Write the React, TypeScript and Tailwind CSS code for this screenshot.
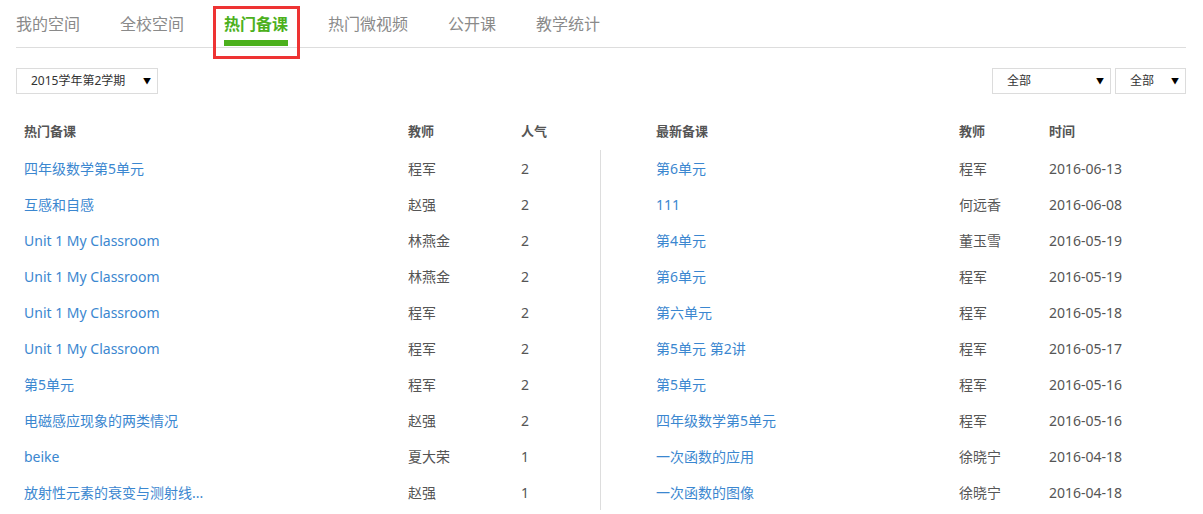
import React from "react"

const hot = [
  ["四年级数学第5单元", "程军", "2"],
  ["互感和自感", "赵强", "2"],
  ["Unit 1 My Classroom", "林燕金", "2"],
  ["Unit 1 My Classroom", "林燕金", "2"],
  ["Unit 1 My Classroom", "程军", "2"],
  ["Unit 1 My Classroom", "程军", "2"],
  ["第5单元", "程军", "2"],
  ["电磁感应现象的两类情况", "赵强", "2"],
  ["beike", "夏大荣", "1"],
  ["放射性元素的衰变与测射线...", "赵强", "1"],
]

const latest = [
  ["第6单元", "程军", "2016-06-13"],
  ["111", "何远香", "2016-06-08"],
  ["第4单元", "董玉雪", "2016-05-19"],
  ["第6单元", "程军", "2016-05-19"],
  ["第六单元", "程军", "2016-05-18"],
  ["第5单元 第2讲", "程军", "2016-05-17"],
  ["第5单元", "程军", "2016-05-16"],
  ["四年级数学第5单元", "程军", "2016-05-16"],
  ["一次函数的应用", "徐晓宁", "2016-04-18"],
  ["一次函数的图像", "徐晓宁", "2016-04-18"],
]

const tabs = ["我的空间", "全校空间", "热门备课", "热门微视频", "公开课", "教学统计"]

function Select({ label, className }: { label: string; className: string }) {
  return (
    <div
      className={`flex h-[26px] items-center justify-between border border-[#dcdcdc] bg-white text-[12px] text-[#333] ${className}`}
    >
      <span>{label}</span>
      <span className="text-[8px] text-black">▼</span>
    </div>
  )
}

export default function App() {
  return (
    <div
      className="h-[514px] w-[1203px] overflow-hidden bg-white"
      style={{ fontFamily: '"Noto Sans", "Noto Sans CJK SC", sans-serif' }}
    >
      {/* Tabs */}
      <div className="mx-[16px] flex h-[48px] w-[1170px] border-b border-[#dddddd]">
        {tabs.map((t, i) => {
          const active = i === 2
          return (
            <div key={t} className="relative mr-[40px] flex h-[47px] flex-col text-[16px]">
              {active && (
                <div className="absolute left-[-11px] top-[6px] h-[53px] w-[87px] border-[3px] border-[#ee3333]" />
              )}
              <span
                className={`pt-[12px] leading-[24px] ${active ? "font-bold text-[#4cb01c]" : "text-[#8a8a8a]"}`}
              >
                {t}
              </span>
              {active && <div className="mt-[4px] h-[6px] w-full bg-[#4cb01c]" />}
            </div>
          )
        })}
      </div>

      {/* Filters */}
      <div className="mx-[16px] mt-[20px] flex w-[1170px] items-center">
        <Select label="2015学年第2学期" className="w-[142px] pl-[14px] pr-[6px]" />
        <div className="flex-1" />
        <Select label="全部" className="w-[119px] pl-[14px] pr-[6px]" />
        <Select label="全部" className="ml-[4px] w-[71px] pl-[14px] pr-[6px]" />
      </div>

      {/* Tables */}
      <div className="mx-[16px] mt-[20px] flex w-[1170px]">
        <div className="w-[584px]">
          <div className="flex h-[36px] items-center text-[13px] font-bold text-[#555]">
            <div className="w-[392px] pl-[8px]">热门备课</div>
            <div className="w-[113px]">教师</div>
            <div>人气</div>
          </div>
          {hot.map((r, i) => (
            <div key={i} className="flex h-[36px] items-center text-[14px]">
              <div className="w-[392px] pl-[8px] text-[#3b87d0]">{r[0]}</div>
              <div className="w-[113px] text-[#555]">{r[1]}</div>
              <div className="text-[#555]">{r[2]}</div>
            </div>
          ))}
        </div>
        <div className="flex-1">
          <div className="flex h-[36px] items-center text-[13px] font-bold text-[#555]">
            <div className="w-[359px] pl-[56px]">最新备课</div>
            <div className="w-[90px]">教师</div>
            <div>时间</div>
          </div>
          <div className="border-l border-[#dddddd]">
            {latest.map((r, i) => (
              <div key={i} className="flex h-[36px] items-center text-[14px]">
                <div className="w-[358px] pl-[55px] text-[#3b87d0]">{r[0]}</div>
                <div className="w-[90px] text-[#555]">{r[1]}</div>
                <div className="text-[#555]">{r[2]}</div>
              </div>
            ))}
          </div>
        </div>
      </div>
    </div>
  )
}
